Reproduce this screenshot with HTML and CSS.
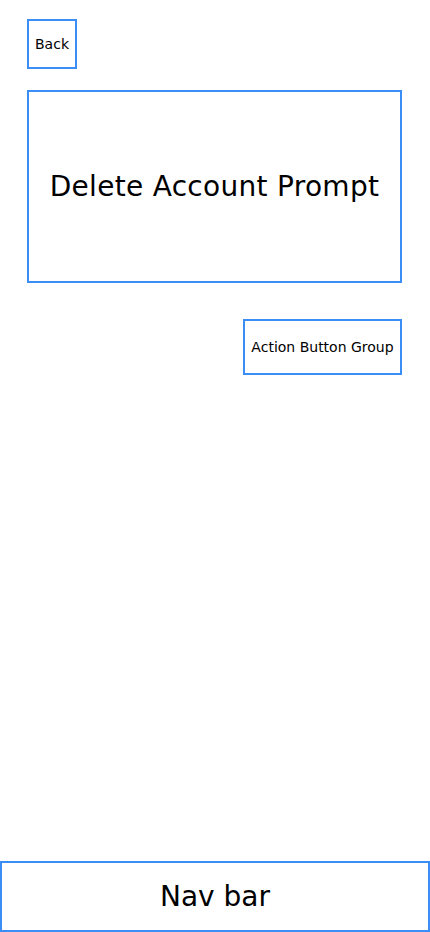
FILE: index.html
```html
<!DOCTYPE html>
<html>
<head>
<meta charset="utf-8">
<link rel="stylesheet" href="styles.css">
</head>
<body>
<div class="screen">
  <main class="content">
    <div class="box back">Back</div>
    <div class="box prompt">Delete Account Prompt</div>
    <div class="actions-row">
      <div class="box actions">Action Button Group</div>
    </div>
  </main>
  <nav class="box navbar">Nav bar</nav>
</div>
</body>
</html>
```
FILE: styles.css
```css
* { box-sizing: border-box; }
html, body { margin: 0; padding: 0; background: #fff; }
body { font-family: "DejaVu Sans", "Liberation Sans", sans-serif; color: #000; }
.screen {
  width: 430px;
  height: 932px;
  display: flex;
  flex-direction: column;
}
.content {
  display: flex;
  flex-direction: column;
  padding: 19px 28px 0 27px;
}
.box {
  border: 2px solid #3a8ef6;
  display: flex;
  align-items: center;
  justify-content: center;
  text-align: center;
}
.back {
  width: 50px;
  height: 50px;
  font-size: 14px;
}
.prompt {
  margin-top: 21px;
  width: 375px;
  height: 193px;
  font-size: 28px;
  letter-spacing: 0.3px;
  white-space: nowrap;
}
.actions-row {
  margin-top: 36px;
  display: flex;
  justify-content: flex-end;
}
.actions {
  width: 159px;
  height: 56px;
  font-size: 14px;
  white-space: nowrap;
}
.navbar {
  margin-top: auto;
  width: 430px;
  height: 71px;
  font-size: 28px;
}
```
